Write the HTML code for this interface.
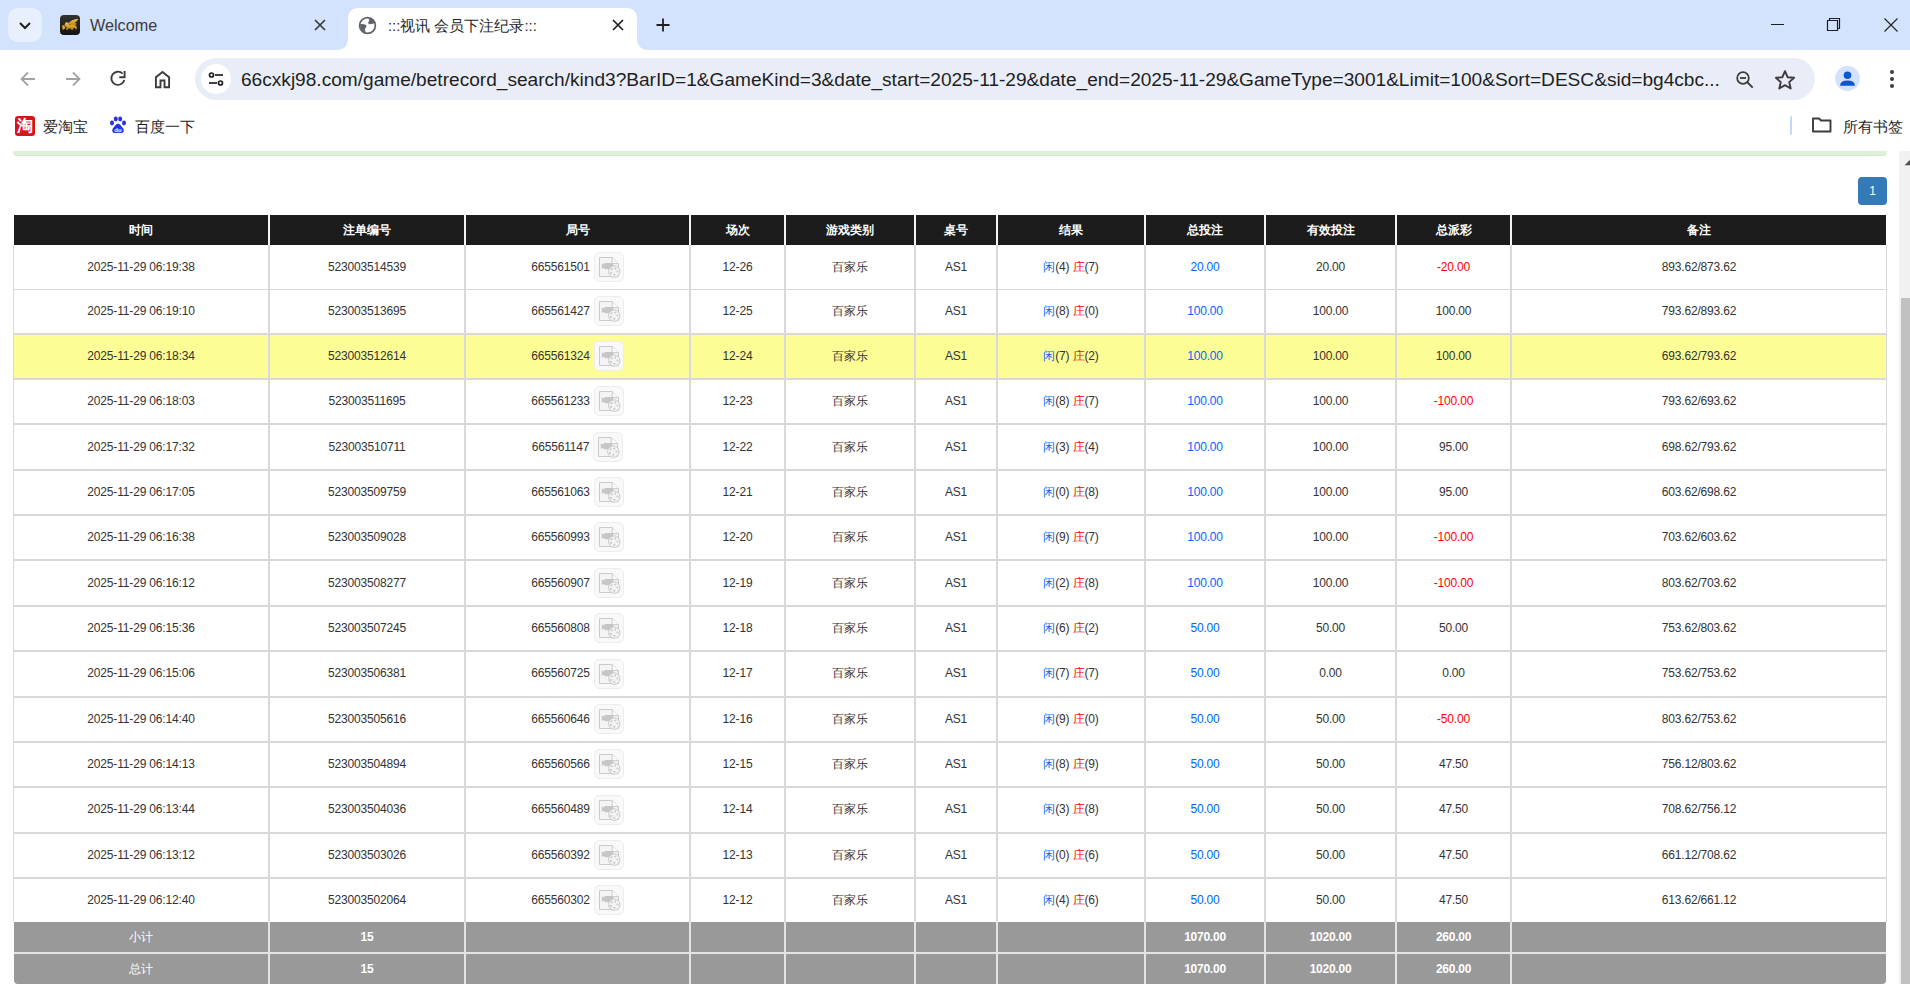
<!DOCTYPE html>
<html><head><meta charset="utf-8">
<style>
*{margin:0;padding:0;box-sizing:border-box}
html,body{width:1910px;height:984px;overflow:hidden;background:#fff;font-family:"Liberation Sans",sans-serif}
.abs{position:absolute}
.tabt{font-size:15px;white-space:nowrap}
.bmt{font-size:15px;color:#1f1f1f;white-space:nowrap;line-height:22px}
#tabs{position:absolute;left:0;top:0;width:1910px;height:50px;background:#d3e3fd}
#toolbar{position:absolute;left:0;top:50px;width:1910px;height:101px;background:#fff;border-top-left-radius:10px}
#page{position:absolute;left:0;top:151px;width:1910px;height:833px;background:#fff;overflow:hidden}
.hd{position:absolute;left:14px;width:1872px;background:#f3f3f3}
.th{position:absolute;background:#1c1c1c;color:#fff;font-weight:bold;font-size:12px;text-align:center;line-height:30px}
.bb{position:absolute;left:13px;width:1874px;background:#d9d9d9}
.gb{position:absolute;left:14px;width:1872px;background:#e4e4e4;border-radius:0 0 4px 4px}
.td{position:absolute;background:#fff;color:#333;font-size:12px;letter-spacing:-0.17px;text-align:center;white-space:nowrap}
.td.yl{background:#fdfd96}
.tg{position:absolute;background:#999;color:#fff;font-weight:bold;font-size:12px;text-align:center;letter-spacing:-0.25px}
.b{color:#0066ff}
.r{color:#ff0000}
.td svg{vertical-align:middle;margin-left:4px;position:relative;top:-1px}
</style></head><body>
<div id="tabs">
 <div class="abs" style="left:8px;top:8px;width:34px;height:34px;border-radius:10px;background:#e9f0fd"></div>
 <svg class="abs" style="left:15px;top:15px" width="20" height="20" viewBox="0 0 20 20"><path d="M5 8l5 5 5-5" fill="none" stroke="#1f1f1f" stroke-width="2"/></svg>
 <div class="abs" style="left:60px;top:15px;width:20px;height:20px;border-radius:4px;background:linear-gradient(#333,#111)"></div>
 <svg class="abs" style="left:60px;top:15px" width="20" height="20" viewBox="0 0 20 20"><defs><linearGradient id="gd" x1="0" y1="0" x2="0" y2="1"><stop offset="0" stop-color="#f2c14a"/><stop offset="1" stop-color="#b8820f"/></linearGradient></defs><path d="M8 9 Q11 4 18.5 4 Q17 6.5 14.5 8 Q16.5 8 17 9 Q15 10.5 12.5 10.5 Z" fill="url(#gd)"/><path d="M5.5 7.5 Q8 6.5 8.8 8.5 L9.5 10 Q13 9.5 16 10.5 Q17.5 12 16.5 14.5 L15.5 14.5 L15 12.8 L13 13.5 L12.8 15 L11.5 15 L11 13.5 L8.5 13.5 L7.5 15 L6.2 15 L6.8 12.5 Q5 11.5 4.5 9.5 Z" fill="url(#gd)"/><path d="M2 10.5 Q3 10 4.5 10.5 L5.5 13 L3 15 Q2 13 2 10.5Z" fill="#d9a52a"/></svg>
 <div class="abs tabt" style="left:90px;top:16px;font-size:16.2px;color:#3b3b3b">Welcome</div>
 <svg class="abs" style="left:314px;top:19px" width="12" height="12" viewBox="0 0 12 12"><path d="M1 1l10 10M11 1L1 11" stroke="#3c3c3c" stroke-width="1.7"/></svg>
 <svg class="abs" style="left:336px;top:8px" width="316" height="42" viewBox="0 0 316 42"><path d="M0 42 Q12 42 12 30 L12 11 Q12 0 23 0 L290 0 Q301 0 301 11 L301 30 Q301 42 313 42 Z" fill="#fff"/></svg>
 <svg class="abs" style="left:358px;top:16px" width="19" height="19" viewBox="0 0 20 20"><circle cx="10" cy="10" r="8.3" fill="none" stroke="#5f6368" stroke-width="1.8"/><path d="M10.5 2.5 Q13 4 11 6 Q10 8 12.5 8.8 Q15 8 17.5 8 Q18 5 14 2.5 Z M2.3 8.5 Q6 8 8.5 9.5 Q9.5 11 8 12.5 Q6.5 13.2 7.5 15 L8 17.5 Q3 16 2.3 10 Z" fill="#5f6368"/></svg>
 <div class="abs tabt" style="left:388px;top:17px;font-size:14.8px;color:#1f1f1f">:::视讯 会员下注纪录:::</div>
 <svg class="abs" style="left:612px;top:19px" width="12" height="12" viewBox="0 0 12 12"><path d="M1 1l10 10M11 1L1 11" stroke="#1f1f1f" stroke-width="1.7"/></svg>
 <svg class="abs" style="left:655px;top:17px" width="16" height="16" viewBox="0 0 16 16"><path d="M8 1.5v13M1.5 8h13" stroke="#1f1f1f" stroke-width="1.8"/></svg>
 <div class="abs" style="left:1771px;top:24px;width:13px;height:1px;background:#1f1f1f"></div>
 <svg class="abs" style="left:1826px;top:17px" width="16" height="16" viewBox="0 0 16 16"><path d="M1.5 3.5h10v10h-10z" fill="none" stroke="#1f1f1f" stroke-width="1.2"/><path d="M3.5 3.2V1.5h10v10h-1.8" fill="none" stroke="#1f1f1f" stroke-width="1.2"/></svg>
 <svg class="abs" style="left:1884px;top:18px" width="14" height="14" viewBox="0 0 14 14"><path d="M0.5 0.5l13 13M13.5 0.5l-13 13" stroke="#1f1f1f" stroke-width="1.1"/></svg>
</div>
<div id="toolbar">
 <svg class="abs" style="left:18px;top:19px" width="20" height="20" viewBox="0 0 20 20"><path d="M17 10H4M10 3.5L3.5 10 10 16.5" fill="none" stroke="#a3a3a3" stroke-width="1.8"/></svg>
 <svg class="abs" style="left:63px;top:19px" width="20" height="20" viewBox="0 0 20 20"><path d="M3 10h13M10 3.5l6.5 6.5-6.5 6.5" fill="none" stroke="#a3a3a3" stroke-width="1.8"/></svg>
 <svg class="abs" style="left:108px;top:19px" width="20" height="20" viewBox="0 0 20 20"><path d="M16.3 11 A6.6 6.6 0 1 1 14.6 4.6" fill="none" stroke="#3c3c3c" stroke-width="1.9"/><path d="M16.6 2v6.2h-5.3" fill="none" stroke="#3c3c3c" stroke-width="1.9"/></svg>
 <svg class="abs" style="left:152px;top:19px" width="20" height="20" viewBox="0 0 20 20"><path d="M3.9 18.3V8.2L10.5 2.9L17.1 8.2v10.1h-4.6v-6.8h-4v6.8z" fill="none" stroke="#3c3c3c" stroke-width="1.9" stroke-linejoin="miter"/></svg>
 <div class="abs" style="left:195px;top:8px;width:1620px;height:42px;border-radius:21px;background:#e9edf7"></div>
 <div class="abs" style="left:201px;top:14px;width:30px;height:30px;border-radius:15px;background:#fff"></div>
 <svg class="abs" style="left:206px;top:19px" width="20" height="20" viewBox="0 0 20 20"><circle cx="5.5" cy="6" r="2" fill="none" stroke="#1f1f1f" stroke-width="1.7"/><path d="M9 6h8" stroke="#1f1f1f" stroke-width="1.7"/><circle cx="14.5" cy="14" r="2" fill="none" stroke="#1f1f1f" stroke-width="1.7"/><path d="M3 14h8" stroke="#1f1f1f" stroke-width="1.7"/></svg>
 <div class="abs" id="url" style="left:241px;top:19px;font-size:19.1px;color:#1f1f1f;white-space:nowrap">66cxkj98.com/game/betrecord_search/kind3?BarID=1&amp;GameKind=3&amp;date_start=2025-11-29&amp;date_end=2025-11-29&amp;GameType=3001&amp;Limit=100&amp;Sort=DESC&amp;sid=bg4cbc...</div>
 <svg class="abs" style="left:1734px;top:19px" width="22" height="22" viewBox="0 0 22 22"><circle cx="9" cy="9" r="5.8" fill="none" stroke="#3c3c3c" stroke-width="1.8"/><path d="M6 9h6" stroke="#3c3c3c" stroke-width="1.8"/><path d="M13.2 13.2l5.5 5.5" stroke="#3c3c3c" stroke-width="1.9"/></svg>
 <svg class="abs" style="left:1773px;top:18px" width="24" height="24" viewBox="0 0 24 24"><path d="M12 3.2l2.6 6 6.5.6-4.9 4.3 1.5 6.4L12 17.1l-5.7 3.4 1.5-6.4-4.9-4.3 6.5-.6z" fill="none" stroke="#3c3c3c" stroke-width="1.9" stroke-linejoin="round"/></svg>
 <div class="abs" style="left:1835px;top:16px;width:25px;height:25px;border-radius:13px;background:#d3e3fd"></div>
 <svg class="abs" style="left:1835px;top:16px" width="25" height="25" viewBox="0 0 25 25"><circle cx="12.5" cy="9.3" r="3.8" fill="#0b57d0"/><path d="M5 19.8 Q5.3 14.5 12.5 14.5 Q19.7 14.5 20 19.8z" fill="#0b57d0"/></svg>
 <div class="abs" style="left:1890px;top:20px;width:4px;height:4px;border-radius:2px;background:#3c3c3c"></div>
 <div class="abs" style="left:1890px;top:27px;width:4px;height:4px;border-radius:2px;background:#3c3c3c"></div>
 <div class="abs" style="left:1890px;top:34px;width:4px;height:4px;border-radius:2px;background:#3c3c3c"></div>
 <div class="abs" style="left:15px;top:66px;width:20px;height:20px;border-radius:3px;background:#d7141b"></div>
 <div class="abs" style="left:15px;top:66px;width:20px;height:20px;color:#fff;font-size:16px;font-weight:bold;text-align:center;line-height:20px">淘</div>
 <div class="abs bmt" style="left:43px;top:66px">爱淘宝</div>
 <svg class="abs" style="left:109px;top:66px" width="18" height="18" viewBox="0 0 18 18"><ellipse cx="3" cy="7" rx="2" ry="2.4" fill="#2932e1"/><ellipse cx="6.8" cy="3" rx="2" ry="2.4" fill="#2932e1"/><ellipse cx="11.2" cy="3" rx="2" ry="2.4" fill="#2932e1"/><ellipse cx="15" cy="7" rx="2" ry="2.4" fill="#2932e1"/><path d="M9 7.5 Q11 7.5 13 11 Q16 14 14 16.5 Q12 17.5 9 16.8 Q6 17.5 4 16.5 Q2 14 5 11 Q7 7.5 9 7.5z" fill="#2932e1"/><text x="9" y="16" font-size="6" font-family="Liberation Sans" font-weight="bold" fill="#fff" text-anchor="middle">du</text></svg>
 <div class="abs bmt" style="left:135px;top:66px">百度一下</div>
 <div class="abs" style="left:1790px;top:66px;width:2px;height:19px;border-radius:1px;background:#c2d7fb"></div>
 <svg class="abs" style="left:1811px;top:66px" width="22" height="18" viewBox="0 0 22 18"><path d="M2 2.5h6l2 2h9.5v11h-17.5z" fill="none" stroke="#3c3c3c" stroke-width="1.9" stroke-linejoin="round"/></svg>
 <div class="abs bmt" style="left:1843px;top:66px">所有书签</div>
</div>
<div style="position:absolute;left:13px;top:151px;width:1874px;height:5px;background:#dff0d8;border-bottom:1px solid #d6e9c6;border-radius:0 0 4px 4px"></div>
<div style="position:absolute;left:1858px;top:177px;width:29px;height:28px;background:#337ab7;border-radius:4px;color:#fff;font-size:12px;text-align:center;line-height:28px">1</div>
<div class="hd" style="top:215px;height:30px"></div>
<div class="th" style="left:14px;width:254px;top:215px;height:30px">时间</div>
<div class="th" style="left:270px;width:194px;top:215px;height:30px">注单编号</div>
<div class="th" style="left:466px;width:223px;top:215px;height:30px">局号</div>
<div class="th" style="left:691px;width:93px;top:215px;height:30px">场次</div>
<div class="th" style="left:786px;width:128px;top:215px;height:30px">游戏类别</div>
<div class="th" style="left:916px;width:80px;top:215px;height:30px">桌号</div>
<div class="th" style="left:998px;width:146px;top:215px;height:30px">结果</div>
<div class="th" style="left:1146px;width:118px;top:215px;height:30px">总投注</div>
<div class="th" style="left:1266px;width:129px;top:215px;height:30px">有效投注</div>
<div class="th" style="left:1397px;width:113px;top:215px;height:30px">总派彩</div>
<div class="th" style="left:1512px;width:374px;top:215px;height:30px">备注</div>
<div class="bb" style="top:245px;height:677px"></div>
<div class="td" style="left:14px;width:254px;top:245px;height:44px;line-height:44px">2025-11-29 06:19:38</div>
<div class="td" style="left:270px;width:194px;top:245px;height:44px;line-height:44px">523003514539</div>
<div class="td" style="left:466px;width:223px;top:245px;height:44px;line-height:44px"><span class="jn">665561501</span><svg width="30" height="30" viewBox="0 0 30 30"><rect x="0.5" y="0.5" width="29" height="29" rx="4.5" fill="#f9f9f9" stroke="#ededed"/><path d="M5.5 5.5H18.2L24.5 11.6V24.5H5.5Z" fill="#f4f4f4" stroke="#cbcbcb"/><path d="M18.2 5.5V11.6H24.5" fill="#fafafa" stroke="#cbcbcb"/><path d="M10.4 11H19.3V17.2H10.4Z M7.8 11.6L10.4 12.6V15.8L7.8 16.8Z" fill="#c6c6c6"/><circle cx="20.3" cy="19.6" r="5.7" fill="#f3f3f3" stroke="#c9c9c9"/><circle cx="17.7" cy="17.2" r="1" fill="#c6c6c6"/><circle cx="21.3" cy="16.6" r="1" fill="#c6c6c6"/><circle cx="23.5" cy="19.6" r="1" fill="#c6c6c6"/><circle cx="17" cy="21" r="1" fill="#c6c6c6"/><circle cx="20.3" cy="22.7" r="1" fill="#c6c6c6"/></svg></div>
<div class="td" style="left:691px;width:93px;top:245px;height:44px;line-height:44px">12-26</div>
<div class="td" style="left:786px;width:128px;top:245px;height:44px;line-height:44px">百家乐</div>
<div class="td" style="left:916px;width:80px;top:245px;height:44px;line-height:44px">AS1</div>
<div class="td" style="left:998px;width:146px;top:245px;height:44px;line-height:44px"><span class="b">闲</span>(4) <span class="r">庄</span>(7)</div>
<div class="td" style="left:1146px;width:118px;top:245px;height:44px;line-height:44px"><span class="b">20.00</span></div>
<div class="td" style="left:1266px;width:129px;top:245px;height:44px;line-height:44px">20.00</div>
<div class="td" style="left:1397px;width:113px;top:245px;height:44px;line-height:44px"><span class="r">-20.00</span></div>
<div class="td" style="left:1512px;width:374px;top:245px;height:44px;line-height:44px">893.62/873.62</div>
<div class="td" style="left:14px;width:254px;top:290px;height:43px;line-height:43px">2025-11-29 06:19:10</div>
<div class="td" style="left:270px;width:194px;top:290px;height:43px;line-height:43px">523003513695</div>
<div class="td" style="left:466px;width:223px;top:290px;height:43px;line-height:43px"><span class="jn">665561427</span><svg width="30" height="30" viewBox="0 0 30 30"><rect x="0.5" y="0.5" width="29" height="29" rx="4.5" fill="#f9f9f9" stroke="#ededed"/><path d="M5.5 5.5H18.2L24.5 11.6V24.5H5.5Z" fill="#f4f4f4" stroke="#cbcbcb"/><path d="M18.2 5.5V11.6H24.5" fill="#fafafa" stroke="#cbcbcb"/><path d="M10.4 11H19.3V17.2H10.4Z M7.8 11.6L10.4 12.6V15.8L7.8 16.8Z" fill="#c6c6c6"/><circle cx="20.3" cy="19.6" r="5.7" fill="#f3f3f3" stroke="#c9c9c9"/><circle cx="17.7" cy="17.2" r="1" fill="#c6c6c6"/><circle cx="21.3" cy="16.6" r="1" fill="#c6c6c6"/><circle cx="23.5" cy="19.6" r="1" fill="#c6c6c6"/><circle cx="17" cy="21" r="1" fill="#c6c6c6"/><circle cx="20.3" cy="22.7" r="1" fill="#c6c6c6"/></svg></div>
<div class="td" style="left:691px;width:93px;top:290px;height:43px;line-height:43px">12-25</div>
<div class="td" style="left:786px;width:128px;top:290px;height:43px;line-height:43px">百家乐</div>
<div class="td" style="left:916px;width:80px;top:290px;height:43px;line-height:43px">AS1</div>
<div class="td" style="left:998px;width:146px;top:290px;height:43px;line-height:43px"><span class="b">闲</span>(8) <span class="r">庄</span>(0)</div>
<div class="td" style="left:1146px;width:118px;top:290px;height:43px;line-height:43px"><span class="b">100.00</span></div>
<div class="td" style="left:1266px;width:129px;top:290px;height:43px;line-height:43px">100.00</div>
<div class="td" style="left:1397px;width:113px;top:290px;height:43px;line-height:43px">100.00</div>
<div class="td" style="left:1512px;width:374px;top:290px;height:43px;line-height:43px">793.62/893.62</div>
<div class="td yl" style="left:14px;width:254px;top:335px;height:43px;line-height:43px">2025-11-29 06:18:34</div>
<div class="td yl" style="left:270px;width:194px;top:335px;height:43px;line-height:43px">523003512614</div>
<div class="td yl" style="left:466px;width:223px;top:335px;height:43px;line-height:43px"><span class="jn">665561324</span><svg width="30" height="30" viewBox="0 0 30 30"><rect x="0.5" y="0.5" width="29" height="29" rx="4.5" fill="#f9f9f9" stroke="#ededed"/><path d="M5.5 5.5H18.2L24.5 11.6V24.5H5.5Z" fill="#f4f4f4" stroke="#cbcbcb"/><path d="M18.2 5.5V11.6H24.5" fill="#fafafa" stroke="#cbcbcb"/><path d="M10.4 11H19.3V17.2H10.4Z M7.8 11.6L10.4 12.6V15.8L7.8 16.8Z" fill="#c6c6c6"/><circle cx="20.3" cy="19.6" r="5.7" fill="#f3f3f3" stroke="#c9c9c9"/><circle cx="17.7" cy="17.2" r="1" fill="#c6c6c6"/><circle cx="21.3" cy="16.6" r="1" fill="#c6c6c6"/><circle cx="23.5" cy="19.6" r="1" fill="#c6c6c6"/><circle cx="17" cy="21" r="1" fill="#c6c6c6"/><circle cx="20.3" cy="22.7" r="1" fill="#c6c6c6"/></svg></div>
<div class="td yl" style="left:691px;width:93px;top:335px;height:43px;line-height:43px">12-24</div>
<div class="td yl" style="left:786px;width:128px;top:335px;height:43px;line-height:43px">百家乐</div>
<div class="td yl" style="left:916px;width:80px;top:335px;height:43px;line-height:43px">AS1</div>
<div class="td yl" style="left:998px;width:146px;top:335px;height:43px;line-height:43px"><span class="b">闲</span>(7) <span class="r">庄</span>(2)</div>
<div class="td yl" style="left:1146px;width:118px;top:335px;height:43px;line-height:43px"><span class="b">100.00</span></div>
<div class="td yl" style="left:1266px;width:129px;top:335px;height:43px;line-height:43px">100.00</div>
<div class="td yl" style="left:1397px;width:113px;top:335px;height:43px;line-height:43px">100.00</div>
<div class="td yl" style="left:1512px;width:374px;top:335px;height:43px;line-height:43px">693.62/793.62</div>
<div class="td" style="left:14px;width:254px;top:380px;height:43px;line-height:43px">2025-11-29 06:18:03</div>
<div class="td" style="left:270px;width:194px;top:380px;height:43px;line-height:43px">523003511695</div>
<div class="td" style="left:466px;width:223px;top:380px;height:43px;line-height:43px"><span class="jn">665561233</span><svg width="30" height="30" viewBox="0 0 30 30"><rect x="0.5" y="0.5" width="29" height="29" rx="4.5" fill="#f9f9f9" stroke="#ededed"/><path d="M5.5 5.5H18.2L24.5 11.6V24.5H5.5Z" fill="#f4f4f4" stroke="#cbcbcb"/><path d="M18.2 5.5V11.6H24.5" fill="#fafafa" stroke="#cbcbcb"/><path d="M10.4 11H19.3V17.2H10.4Z M7.8 11.6L10.4 12.6V15.8L7.8 16.8Z" fill="#c6c6c6"/><circle cx="20.3" cy="19.6" r="5.7" fill="#f3f3f3" stroke="#c9c9c9"/><circle cx="17.7" cy="17.2" r="1" fill="#c6c6c6"/><circle cx="21.3" cy="16.6" r="1" fill="#c6c6c6"/><circle cx="23.5" cy="19.6" r="1" fill="#c6c6c6"/><circle cx="17" cy="21" r="1" fill="#c6c6c6"/><circle cx="20.3" cy="22.7" r="1" fill="#c6c6c6"/></svg></div>
<div class="td" style="left:691px;width:93px;top:380px;height:43px;line-height:43px">12-23</div>
<div class="td" style="left:786px;width:128px;top:380px;height:43px;line-height:43px">百家乐</div>
<div class="td" style="left:916px;width:80px;top:380px;height:43px;line-height:43px">AS1</div>
<div class="td" style="left:998px;width:146px;top:380px;height:43px;line-height:43px"><span class="b">闲</span>(8) <span class="r">庄</span>(7)</div>
<div class="td" style="left:1146px;width:118px;top:380px;height:43px;line-height:43px"><span class="b">100.00</span></div>
<div class="td" style="left:1266px;width:129px;top:380px;height:43px;line-height:43px">100.00</div>
<div class="td" style="left:1397px;width:113px;top:380px;height:43px;line-height:43px"><span class="r">-100.00</span></div>
<div class="td" style="left:1512px;width:374px;top:380px;height:43px;line-height:43px">793.62/693.62</div>
<div class="td" style="left:14px;width:254px;top:425px;height:44px;line-height:44px">2025-11-29 06:17:32</div>
<div class="td" style="left:270px;width:194px;top:425px;height:44px;line-height:44px">523003510711</div>
<div class="td" style="left:466px;width:223px;top:425px;height:44px;line-height:44px"><span class="jn">665561147</span><svg width="30" height="30" viewBox="0 0 30 30"><rect x="0.5" y="0.5" width="29" height="29" rx="4.5" fill="#f9f9f9" stroke="#ededed"/><path d="M5.5 5.5H18.2L24.5 11.6V24.5H5.5Z" fill="#f4f4f4" stroke="#cbcbcb"/><path d="M18.2 5.5V11.6H24.5" fill="#fafafa" stroke="#cbcbcb"/><path d="M10.4 11H19.3V17.2H10.4Z M7.8 11.6L10.4 12.6V15.8L7.8 16.8Z" fill="#c6c6c6"/><circle cx="20.3" cy="19.6" r="5.7" fill="#f3f3f3" stroke="#c9c9c9"/><circle cx="17.7" cy="17.2" r="1" fill="#c6c6c6"/><circle cx="21.3" cy="16.6" r="1" fill="#c6c6c6"/><circle cx="23.5" cy="19.6" r="1" fill="#c6c6c6"/><circle cx="17" cy="21" r="1" fill="#c6c6c6"/><circle cx="20.3" cy="22.7" r="1" fill="#c6c6c6"/></svg></div>
<div class="td" style="left:691px;width:93px;top:425px;height:44px;line-height:44px">12-22</div>
<div class="td" style="left:786px;width:128px;top:425px;height:44px;line-height:44px">百家乐</div>
<div class="td" style="left:916px;width:80px;top:425px;height:44px;line-height:44px">AS1</div>
<div class="td" style="left:998px;width:146px;top:425px;height:44px;line-height:44px"><span class="b">闲</span>(3) <span class="r">庄</span>(4)</div>
<div class="td" style="left:1146px;width:118px;top:425px;height:44px;line-height:44px"><span class="b">100.00</span></div>
<div class="td" style="left:1266px;width:129px;top:425px;height:44px;line-height:44px">100.00</div>
<div class="td" style="left:1397px;width:113px;top:425px;height:44px;line-height:44px">95.00</div>
<div class="td" style="left:1512px;width:374px;top:425px;height:44px;line-height:44px">698.62/793.62</div>
<div class="td" style="left:14px;width:254px;top:471px;height:43px;line-height:43px">2025-11-29 06:17:05</div>
<div class="td" style="left:270px;width:194px;top:471px;height:43px;line-height:43px">523003509759</div>
<div class="td" style="left:466px;width:223px;top:471px;height:43px;line-height:43px"><span class="jn">665561063</span><svg width="30" height="30" viewBox="0 0 30 30"><rect x="0.5" y="0.5" width="29" height="29" rx="4.5" fill="#f9f9f9" stroke="#ededed"/><path d="M5.5 5.5H18.2L24.5 11.6V24.5H5.5Z" fill="#f4f4f4" stroke="#cbcbcb"/><path d="M18.2 5.5V11.6H24.5" fill="#fafafa" stroke="#cbcbcb"/><path d="M10.4 11H19.3V17.2H10.4Z M7.8 11.6L10.4 12.6V15.8L7.8 16.8Z" fill="#c6c6c6"/><circle cx="20.3" cy="19.6" r="5.7" fill="#f3f3f3" stroke="#c9c9c9"/><circle cx="17.7" cy="17.2" r="1" fill="#c6c6c6"/><circle cx="21.3" cy="16.6" r="1" fill="#c6c6c6"/><circle cx="23.5" cy="19.6" r="1" fill="#c6c6c6"/><circle cx="17" cy="21" r="1" fill="#c6c6c6"/><circle cx="20.3" cy="22.7" r="1" fill="#c6c6c6"/></svg></div>
<div class="td" style="left:691px;width:93px;top:471px;height:43px;line-height:43px">12-21</div>
<div class="td" style="left:786px;width:128px;top:471px;height:43px;line-height:43px">百家乐</div>
<div class="td" style="left:916px;width:80px;top:471px;height:43px;line-height:43px">AS1</div>
<div class="td" style="left:998px;width:146px;top:471px;height:43px;line-height:43px"><span class="b">闲</span>(0) <span class="r">庄</span>(8)</div>
<div class="td" style="left:1146px;width:118px;top:471px;height:43px;line-height:43px"><span class="b">100.00</span></div>
<div class="td" style="left:1266px;width:129px;top:471px;height:43px;line-height:43px">100.00</div>
<div class="td" style="left:1397px;width:113px;top:471px;height:43px;line-height:43px">95.00</div>
<div class="td" style="left:1512px;width:374px;top:471px;height:43px;line-height:43px">603.62/698.62</div>
<div class="td" style="left:14px;width:254px;top:516px;height:43px;line-height:43px">2025-11-29 06:16:38</div>
<div class="td" style="left:270px;width:194px;top:516px;height:43px;line-height:43px">523003509028</div>
<div class="td" style="left:466px;width:223px;top:516px;height:43px;line-height:43px"><span class="jn">665560993</span><svg width="30" height="30" viewBox="0 0 30 30"><rect x="0.5" y="0.5" width="29" height="29" rx="4.5" fill="#f9f9f9" stroke="#ededed"/><path d="M5.5 5.5H18.2L24.5 11.6V24.5H5.5Z" fill="#f4f4f4" stroke="#cbcbcb"/><path d="M18.2 5.5V11.6H24.5" fill="#fafafa" stroke="#cbcbcb"/><path d="M10.4 11H19.3V17.2H10.4Z M7.8 11.6L10.4 12.6V15.8L7.8 16.8Z" fill="#c6c6c6"/><circle cx="20.3" cy="19.6" r="5.7" fill="#f3f3f3" stroke="#c9c9c9"/><circle cx="17.7" cy="17.2" r="1" fill="#c6c6c6"/><circle cx="21.3" cy="16.6" r="1" fill="#c6c6c6"/><circle cx="23.5" cy="19.6" r="1" fill="#c6c6c6"/><circle cx="17" cy="21" r="1" fill="#c6c6c6"/><circle cx="20.3" cy="22.7" r="1" fill="#c6c6c6"/></svg></div>
<div class="td" style="left:691px;width:93px;top:516px;height:43px;line-height:43px">12-20</div>
<div class="td" style="left:786px;width:128px;top:516px;height:43px;line-height:43px">百家乐</div>
<div class="td" style="left:916px;width:80px;top:516px;height:43px;line-height:43px">AS1</div>
<div class="td" style="left:998px;width:146px;top:516px;height:43px;line-height:43px"><span class="b">闲</span>(9) <span class="r">庄</span>(7)</div>
<div class="td" style="left:1146px;width:118px;top:516px;height:43px;line-height:43px"><span class="b">100.00</span></div>
<div class="td" style="left:1266px;width:129px;top:516px;height:43px;line-height:43px">100.00</div>
<div class="td" style="left:1397px;width:113px;top:516px;height:43px;line-height:43px"><span class="r">-100.00</span></div>
<div class="td" style="left:1512px;width:374px;top:516px;height:43px;line-height:43px">703.62/603.62</div>
<div class="td" style="left:14px;width:254px;top:561px;height:44px;line-height:44px">2025-11-29 06:16:12</div>
<div class="td" style="left:270px;width:194px;top:561px;height:44px;line-height:44px">523003508277</div>
<div class="td" style="left:466px;width:223px;top:561px;height:44px;line-height:44px"><span class="jn">665560907</span><svg width="30" height="30" viewBox="0 0 30 30"><rect x="0.5" y="0.5" width="29" height="29" rx="4.5" fill="#f9f9f9" stroke="#ededed"/><path d="M5.5 5.5H18.2L24.5 11.6V24.5H5.5Z" fill="#f4f4f4" stroke="#cbcbcb"/><path d="M18.2 5.5V11.6H24.5" fill="#fafafa" stroke="#cbcbcb"/><path d="M10.4 11H19.3V17.2H10.4Z M7.8 11.6L10.4 12.6V15.8L7.8 16.8Z" fill="#c6c6c6"/><circle cx="20.3" cy="19.6" r="5.7" fill="#f3f3f3" stroke="#c9c9c9"/><circle cx="17.7" cy="17.2" r="1" fill="#c6c6c6"/><circle cx="21.3" cy="16.6" r="1" fill="#c6c6c6"/><circle cx="23.5" cy="19.6" r="1" fill="#c6c6c6"/><circle cx="17" cy="21" r="1" fill="#c6c6c6"/><circle cx="20.3" cy="22.7" r="1" fill="#c6c6c6"/></svg></div>
<div class="td" style="left:691px;width:93px;top:561px;height:44px;line-height:44px">12-19</div>
<div class="td" style="left:786px;width:128px;top:561px;height:44px;line-height:44px">百家乐</div>
<div class="td" style="left:916px;width:80px;top:561px;height:44px;line-height:44px">AS1</div>
<div class="td" style="left:998px;width:146px;top:561px;height:44px;line-height:44px"><span class="b">闲</span>(2) <span class="r">庄</span>(8)</div>
<div class="td" style="left:1146px;width:118px;top:561px;height:44px;line-height:44px"><span class="b">100.00</span></div>
<div class="td" style="left:1266px;width:129px;top:561px;height:44px;line-height:44px">100.00</div>
<div class="td" style="left:1397px;width:113px;top:561px;height:44px;line-height:44px"><span class="r">-100.00</span></div>
<div class="td" style="left:1512px;width:374px;top:561px;height:44px;line-height:44px">803.62/703.62</div>
<div class="td" style="left:14px;width:254px;top:607px;height:43px;line-height:43px">2025-11-29 06:15:36</div>
<div class="td" style="left:270px;width:194px;top:607px;height:43px;line-height:43px">523003507245</div>
<div class="td" style="left:466px;width:223px;top:607px;height:43px;line-height:43px"><span class="jn">665560808</span><svg width="30" height="30" viewBox="0 0 30 30"><rect x="0.5" y="0.5" width="29" height="29" rx="4.5" fill="#f9f9f9" stroke="#ededed"/><path d="M5.5 5.5H18.2L24.5 11.6V24.5H5.5Z" fill="#f4f4f4" stroke="#cbcbcb"/><path d="M18.2 5.5V11.6H24.5" fill="#fafafa" stroke="#cbcbcb"/><path d="M10.4 11H19.3V17.2H10.4Z M7.8 11.6L10.4 12.6V15.8L7.8 16.8Z" fill="#c6c6c6"/><circle cx="20.3" cy="19.6" r="5.7" fill="#f3f3f3" stroke="#c9c9c9"/><circle cx="17.7" cy="17.2" r="1" fill="#c6c6c6"/><circle cx="21.3" cy="16.6" r="1" fill="#c6c6c6"/><circle cx="23.5" cy="19.6" r="1" fill="#c6c6c6"/><circle cx="17" cy="21" r="1" fill="#c6c6c6"/><circle cx="20.3" cy="22.7" r="1" fill="#c6c6c6"/></svg></div>
<div class="td" style="left:691px;width:93px;top:607px;height:43px;line-height:43px">12-18</div>
<div class="td" style="left:786px;width:128px;top:607px;height:43px;line-height:43px">百家乐</div>
<div class="td" style="left:916px;width:80px;top:607px;height:43px;line-height:43px">AS1</div>
<div class="td" style="left:998px;width:146px;top:607px;height:43px;line-height:43px"><span class="b">闲</span>(6) <span class="r">庄</span>(2)</div>
<div class="td" style="left:1146px;width:118px;top:607px;height:43px;line-height:43px"><span class="b">50.00</span></div>
<div class="td" style="left:1266px;width:129px;top:607px;height:43px;line-height:43px">50.00</div>
<div class="td" style="left:1397px;width:113px;top:607px;height:43px;line-height:43px">50.00</div>
<div class="td" style="left:1512px;width:374px;top:607px;height:43px;line-height:43px">753.62/803.62</div>
<div class="td" style="left:14px;width:254px;top:652px;height:44px;line-height:42px">2025-11-29 06:15:06</div>
<div class="td" style="left:270px;width:194px;top:652px;height:44px;line-height:42px">523003506381</div>
<div class="td" style="left:466px;width:223px;top:652px;height:44px;line-height:42px"><span class="jn">665560725</span><svg style="top:0" width="30" height="30" viewBox="0 0 30 30"><rect x="0.5" y="0.5" width="29" height="29" rx="4.5" fill="#f9f9f9" stroke="#ededed"/><path d="M5.5 5.5H18.2L24.5 11.6V24.5H5.5Z" fill="#f4f4f4" stroke="#cbcbcb"/><path d="M18.2 5.5V11.6H24.5" fill="#fafafa" stroke="#cbcbcb"/><path d="M10.4 11H19.3V17.2H10.4Z M7.8 11.6L10.4 12.6V15.8L7.8 16.8Z" fill="#c6c6c6"/><circle cx="20.3" cy="19.6" r="5.7" fill="#f3f3f3" stroke="#c9c9c9"/><circle cx="17.7" cy="17.2" r="1" fill="#c6c6c6"/><circle cx="21.3" cy="16.6" r="1" fill="#c6c6c6"/><circle cx="23.5" cy="19.6" r="1" fill="#c6c6c6"/><circle cx="17" cy="21" r="1" fill="#c6c6c6"/><circle cx="20.3" cy="22.7" r="1" fill="#c6c6c6"/></svg></div>
<div class="td" style="left:691px;width:93px;top:652px;height:44px;line-height:42px">12-17</div>
<div class="td" style="left:786px;width:128px;top:652px;height:44px;line-height:42px">百家乐</div>
<div class="td" style="left:916px;width:80px;top:652px;height:44px;line-height:42px">AS1</div>
<div class="td" style="left:998px;width:146px;top:652px;height:44px;line-height:42px"><span class="b">闲</span>(7) <span class="r">庄</span>(7)</div>
<div class="td" style="left:1146px;width:118px;top:652px;height:44px;line-height:42px"><span class="b">50.00</span></div>
<div class="td" style="left:1266px;width:129px;top:652px;height:44px;line-height:42px">0.00</div>
<div class="td" style="left:1397px;width:113px;top:652px;height:44px;line-height:42px">0.00</div>
<div class="td" style="left:1512px;width:374px;top:652px;height:44px;line-height:42px">753.62/753.62</div>
<div class="td" style="left:14px;width:254px;top:698px;height:43px;line-height:43px">2025-11-29 06:14:40</div>
<div class="td" style="left:270px;width:194px;top:698px;height:43px;line-height:43px">523003505616</div>
<div class="td" style="left:466px;width:223px;top:698px;height:43px;line-height:43px"><span class="jn">665560646</span><svg width="30" height="30" viewBox="0 0 30 30"><rect x="0.5" y="0.5" width="29" height="29" rx="4.5" fill="#f9f9f9" stroke="#ededed"/><path d="M5.5 5.5H18.2L24.5 11.6V24.5H5.5Z" fill="#f4f4f4" stroke="#cbcbcb"/><path d="M18.2 5.5V11.6H24.5" fill="#fafafa" stroke="#cbcbcb"/><path d="M10.4 11H19.3V17.2H10.4Z M7.8 11.6L10.4 12.6V15.8L7.8 16.8Z" fill="#c6c6c6"/><circle cx="20.3" cy="19.6" r="5.7" fill="#f3f3f3" stroke="#c9c9c9"/><circle cx="17.7" cy="17.2" r="1" fill="#c6c6c6"/><circle cx="21.3" cy="16.6" r="1" fill="#c6c6c6"/><circle cx="23.5" cy="19.6" r="1" fill="#c6c6c6"/><circle cx="17" cy="21" r="1" fill="#c6c6c6"/><circle cx="20.3" cy="22.7" r="1" fill="#c6c6c6"/></svg></div>
<div class="td" style="left:691px;width:93px;top:698px;height:43px;line-height:43px">12-16</div>
<div class="td" style="left:786px;width:128px;top:698px;height:43px;line-height:43px">百家乐</div>
<div class="td" style="left:916px;width:80px;top:698px;height:43px;line-height:43px">AS1</div>
<div class="td" style="left:998px;width:146px;top:698px;height:43px;line-height:43px"><span class="b">闲</span>(9) <span class="r">庄</span>(0)</div>
<div class="td" style="left:1146px;width:118px;top:698px;height:43px;line-height:43px"><span class="b">50.00</span></div>
<div class="td" style="left:1266px;width:129px;top:698px;height:43px;line-height:43px">50.00</div>
<div class="td" style="left:1397px;width:113px;top:698px;height:43px;line-height:43px"><span class="r">-50.00</span></div>
<div class="td" style="left:1512px;width:374px;top:698px;height:43px;line-height:43px">803.62/753.62</div>
<div class="td" style="left:14px;width:254px;top:743px;height:43px;line-height:43px">2025-11-29 06:14:13</div>
<div class="td" style="left:270px;width:194px;top:743px;height:43px;line-height:43px">523003504894</div>
<div class="td" style="left:466px;width:223px;top:743px;height:43px;line-height:43px"><span class="jn">665560566</span><svg width="30" height="30" viewBox="0 0 30 30"><rect x="0.5" y="0.5" width="29" height="29" rx="4.5" fill="#f9f9f9" stroke="#ededed"/><path d="M5.5 5.5H18.2L24.5 11.6V24.5H5.5Z" fill="#f4f4f4" stroke="#cbcbcb"/><path d="M18.2 5.5V11.6H24.5" fill="#fafafa" stroke="#cbcbcb"/><path d="M10.4 11H19.3V17.2H10.4Z M7.8 11.6L10.4 12.6V15.8L7.8 16.8Z" fill="#c6c6c6"/><circle cx="20.3" cy="19.6" r="5.7" fill="#f3f3f3" stroke="#c9c9c9"/><circle cx="17.7" cy="17.2" r="1" fill="#c6c6c6"/><circle cx="21.3" cy="16.6" r="1" fill="#c6c6c6"/><circle cx="23.5" cy="19.6" r="1" fill="#c6c6c6"/><circle cx="17" cy="21" r="1" fill="#c6c6c6"/><circle cx="20.3" cy="22.7" r="1" fill="#c6c6c6"/></svg></div>
<div class="td" style="left:691px;width:93px;top:743px;height:43px;line-height:43px">12-15</div>
<div class="td" style="left:786px;width:128px;top:743px;height:43px;line-height:43px">百家乐</div>
<div class="td" style="left:916px;width:80px;top:743px;height:43px;line-height:43px">AS1</div>
<div class="td" style="left:998px;width:146px;top:743px;height:43px;line-height:43px"><span class="b">闲</span>(8) <span class="r">庄</span>(9)</div>
<div class="td" style="left:1146px;width:118px;top:743px;height:43px;line-height:43px"><span class="b">50.00</span></div>
<div class="td" style="left:1266px;width:129px;top:743px;height:43px;line-height:43px">50.00</div>
<div class="td" style="left:1397px;width:113px;top:743px;height:43px;line-height:43px">47.50</div>
<div class="td" style="left:1512px;width:374px;top:743px;height:43px;line-height:43px">756.12/803.62</div>
<div class="td" style="left:14px;width:254px;top:788px;height:44px;line-height:42px">2025-11-29 06:13:44</div>
<div class="td" style="left:270px;width:194px;top:788px;height:44px;line-height:42px">523003504036</div>
<div class="td" style="left:466px;width:223px;top:788px;height:44px;line-height:42px"><span class="jn">665560489</span><svg style="top:0" width="30" height="30" viewBox="0 0 30 30"><rect x="0.5" y="0.5" width="29" height="29" rx="4.5" fill="#f9f9f9" stroke="#ededed"/><path d="M5.5 5.5H18.2L24.5 11.6V24.5H5.5Z" fill="#f4f4f4" stroke="#cbcbcb"/><path d="M18.2 5.5V11.6H24.5" fill="#fafafa" stroke="#cbcbcb"/><path d="M10.4 11H19.3V17.2H10.4Z M7.8 11.6L10.4 12.6V15.8L7.8 16.8Z" fill="#c6c6c6"/><circle cx="20.3" cy="19.6" r="5.7" fill="#f3f3f3" stroke="#c9c9c9"/><circle cx="17.7" cy="17.2" r="1" fill="#c6c6c6"/><circle cx="21.3" cy="16.6" r="1" fill="#c6c6c6"/><circle cx="23.5" cy="19.6" r="1" fill="#c6c6c6"/><circle cx="17" cy="21" r="1" fill="#c6c6c6"/><circle cx="20.3" cy="22.7" r="1" fill="#c6c6c6"/></svg></div>
<div class="td" style="left:691px;width:93px;top:788px;height:44px;line-height:42px">12-14</div>
<div class="td" style="left:786px;width:128px;top:788px;height:44px;line-height:42px">百家乐</div>
<div class="td" style="left:916px;width:80px;top:788px;height:44px;line-height:42px">AS1</div>
<div class="td" style="left:998px;width:146px;top:788px;height:44px;line-height:42px"><span class="b">闲</span>(3) <span class="r">庄</span>(8)</div>
<div class="td" style="left:1146px;width:118px;top:788px;height:44px;line-height:42px"><span class="b">50.00</span></div>
<div class="td" style="left:1266px;width:129px;top:788px;height:44px;line-height:42px">50.00</div>
<div class="td" style="left:1397px;width:113px;top:788px;height:44px;line-height:42px">47.50</div>
<div class="td" style="left:1512px;width:374px;top:788px;height:44px;line-height:42px">708.62/756.12</div>
<div class="td" style="left:14px;width:254px;top:834px;height:43px;line-height:43px">2025-11-29 06:13:12</div>
<div class="td" style="left:270px;width:194px;top:834px;height:43px;line-height:43px">523003503026</div>
<div class="td" style="left:466px;width:223px;top:834px;height:43px;line-height:43px"><span class="jn">665560392</span><svg width="30" height="30" viewBox="0 0 30 30"><rect x="0.5" y="0.5" width="29" height="29" rx="4.5" fill="#f9f9f9" stroke="#ededed"/><path d="M5.5 5.5H18.2L24.5 11.6V24.5H5.5Z" fill="#f4f4f4" stroke="#cbcbcb"/><path d="M18.2 5.5V11.6H24.5" fill="#fafafa" stroke="#cbcbcb"/><path d="M10.4 11H19.3V17.2H10.4Z M7.8 11.6L10.4 12.6V15.8L7.8 16.8Z" fill="#c6c6c6"/><circle cx="20.3" cy="19.6" r="5.7" fill="#f3f3f3" stroke="#c9c9c9"/><circle cx="17.7" cy="17.2" r="1" fill="#c6c6c6"/><circle cx="21.3" cy="16.6" r="1" fill="#c6c6c6"/><circle cx="23.5" cy="19.6" r="1" fill="#c6c6c6"/><circle cx="17" cy="21" r="1" fill="#c6c6c6"/><circle cx="20.3" cy="22.7" r="1" fill="#c6c6c6"/></svg></div>
<div class="td" style="left:691px;width:93px;top:834px;height:43px;line-height:43px">12-13</div>
<div class="td" style="left:786px;width:128px;top:834px;height:43px;line-height:43px">百家乐</div>
<div class="td" style="left:916px;width:80px;top:834px;height:43px;line-height:43px">AS1</div>
<div class="td" style="left:998px;width:146px;top:834px;height:43px;line-height:43px"><span class="b">闲</span>(0) <span class="r">庄</span>(6)</div>
<div class="td" style="left:1146px;width:118px;top:834px;height:43px;line-height:43px"><span class="b">50.00</span></div>
<div class="td" style="left:1266px;width:129px;top:834px;height:43px;line-height:43px">50.00</div>
<div class="td" style="left:1397px;width:113px;top:834px;height:43px;line-height:43px">47.50</div>
<div class="td" style="left:1512px;width:374px;top:834px;height:43px;line-height:43px">661.12/708.62</div>
<div class="td" style="left:14px;width:254px;top:879px;height:43px;line-height:43px">2025-11-29 06:12:40</div>
<div class="td" style="left:270px;width:194px;top:879px;height:43px;line-height:43px">523003502064</div>
<div class="td" style="left:466px;width:223px;top:879px;height:43px;line-height:43px"><span class="jn">665560302</span><svg width="30" height="30" viewBox="0 0 30 30"><rect x="0.5" y="0.5" width="29" height="29" rx="4.5" fill="#f9f9f9" stroke="#ededed"/><path d="M5.5 5.5H18.2L24.5 11.6V24.5H5.5Z" fill="#f4f4f4" stroke="#cbcbcb"/><path d="M18.2 5.5V11.6H24.5" fill="#fafafa" stroke="#cbcbcb"/><path d="M10.4 11H19.3V17.2H10.4Z M7.8 11.6L10.4 12.6V15.8L7.8 16.8Z" fill="#c6c6c6"/><circle cx="20.3" cy="19.6" r="5.7" fill="#f3f3f3" stroke="#c9c9c9"/><circle cx="17.7" cy="17.2" r="1" fill="#c6c6c6"/><circle cx="21.3" cy="16.6" r="1" fill="#c6c6c6"/><circle cx="23.5" cy="19.6" r="1" fill="#c6c6c6"/><circle cx="17" cy="21" r="1" fill="#c6c6c6"/><circle cx="20.3" cy="22.7" r="1" fill="#c6c6c6"/></svg></div>
<div class="td" style="left:691px;width:93px;top:879px;height:43px;line-height:43px">12-12</div>
<div class="td" style="left:786px;width:128px;top:879px;height:43px;line-height:43px">百家乐</div>
<div class="td" style="left:916px;width:80px;top:879px;height:43px;line-height:43px">AS1</div>
<div class="td" style="left:998px;width:146px;top:879px;height:43px;line-height:43px"><span class="b">闲</span>(4) <span class="r">庄</span>(6)</div>
<div class="td" style="left:1146px;width:118px;top:879px;height:43px;line-height:43px"><span class="b">50.00</span></div>
<div class="td" style="left:1266px;width:129px;top:879px;height:43px;line-height:43px">50.00</div>
<div class="td" style="left:1397px;width:113px;top:879px;height:43px;line-height:43px">47.50</div>
<div class="td" style="left:1512px;width:374px;top:879px;height:43px;line-height:43px">613.62/661.12</div>
<div class="gb" style="top:922px;height:62px"></div>
<div class="tg" style="left:14px;width:254px;top:922px;height:30px;line-height:30px;"><span style="font-weight:normal">小计</span></div>
<div class="tg" style="left:270px;width:194px;top:922px;height:30px;line-height:30px;">15</div>
<div class="tg" style="left:466px;width:223px;top:922px;height:30px;line-height:30px;"></div>
<div class="tg" style="left:691px;width:93px;top:922px;height:30px;line-height:30px;"></div>
<div class="tg" style="left:786px;width:128px;top:922px;height:30px;line-height:30px;"></div>
<div class="tg" style="left:916px;width:80px;top:922px;height:30px;line-height:30px;"></div>
<div class="tg" style="left:998px;width:146px;top:922px;height:30px;line-height:30px;"></div>
<div class="tg" style="left:1146px;width:118px;top:922px;height:30px;line-height:30px;">1070.00</div>
<div class="tg" style="left:1266px;width:129px;top:922px;height:30px;line-height:30px;">1020.00</div>
<div class="tg" style="left:1397px;width:113px;top:922px;height:30px;line-height:30px;">260.00</div>
<div class="tg" style="left:1512px;width:374px;top:922px;height:30px;line-height:30px;"></div>
<div class="tg" style="left:14px;width:254px;top:954px;height:30px;line-height:30px;border-bottom-left-radius:4px;"><span style="font-weight:normal">总计</span></div>
<div class="tg" style="left:270px;width:194px;top:954px;height:30px;line-height:30px;">15</div>
<div class="tg" style="left:466px;width:223px;top:954px;height:30px;line-height:30px;"></div>
<div class="tg" style="left:691px;width:93px;top:954px;height:30px;line-height:30px;"></div>
<div class="tg" style="left:786px;width:128px;top:954px;height:30px;line-height:30px;"></div>
<div class="tg" style="left:916px;width:80px;top:954px;height:30px;line-height:30px;"></div>
<div class="tg" style="left:998px;width:146px;top:954px;height:30px;line-height:30px;"></div>
<div class="tg" style="left:1146px;width:118px;top:954px;height:30px;line-height:30px;">1070.00</div>
<div class="tg" style="left:1266px;width:129px;top:954px;height:30px;line-height:30px;">1020.00</div>
<div class="tg" style="left:1397px;width:113px;top:954px;height:30px;line-height:30px;">260.00</div>
<div class="tg" style="left:1512px;width:374px;top:954px;height:30px;line-height:30px;border-bottom-right-radius:4px;"></div>
<div style="position:absolute;left:1899px;top:151px;width:11px;height:833px;background:#f1f1f1"></div>
<div style="position:absolute;left:1901px;top:298px;width:9px;height:686px;background:#c1c1c1"></div>
<svg style="position:absolute;left:1899px;top:151px" width="11" height="20" viewBox="0 0 11 20"><path d="M5.6 14.2L11 8.8L16.4 14.2Z" fill="#505050"/></svg>
</body></html>
